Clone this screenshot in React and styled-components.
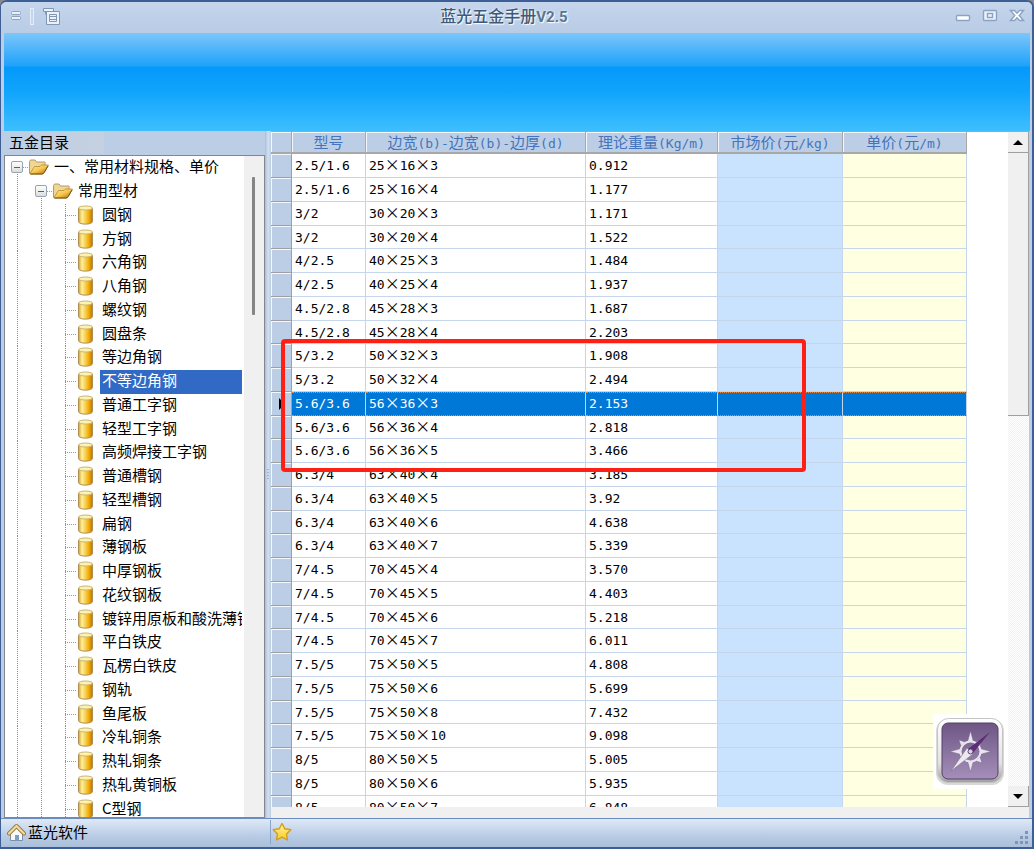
import React from "react";
import styled, { createGlobalStyle } from "styled-components";

const GlobalStyle = createGlobalStyle`
  * {
    box-sizing: border-box;
  }

  body {
    margin: 0;
    background: #8a8a8a;
    font-family: "Noto Sans CJK SC", sans-serif;
    font-size: 15px;
    color: #000;
  }

  button {
    font: inherit;
    color: inherit;
    background: none;
    border: 0;
    padding: 0;
  }
`;

const Window = styled.div`
  display: flex;
  flex-direction: column;
  height: 100vh;
  overflow: hidden;
  background: #bccee6;
  border: solid #3d5f96;
  border-width: 2px 2px 2px 1px;
  border-radius: 7px 7px 0 0;
`;

const TitleBar = styled.header`
  display: grid;
  grid-template-columns: 1fr auto 1fr;
  align-items: center;
  flex: none;
  height: 31px;
  padding: 0 6px 3px 9px;
  background: linear-gradient(#c4d5ec, #b9cce5);
`;

const Title = styled.h1`
  margin: 0 28px 0 0;
  font-size: 16px;
  line-height: 24px;
  font-weight: 500;
  color: #3f5a78;
  text-shadow: 1px 1px 1px #fff, 0 0 3px #e6effa;

  span {
    font-family: Roboto, sans-serif;
    font-size: 15px;
    font-weight: 700;
    color: #5b7590;
  }
`;

const TitleTools = styled.div`
  display: flex;
  align-items: center;
  gap: ${({ $end }) => ($end ? "9px" : "8px")};
  justify-content: ${({ $end }) => ($end ? "flex-end" : "flex-start")};

  button,
  svg {
    display: block;
  }
`;

const Banner = styled.div`
  flex: none;
  height: 98px;
  margin: 0 2px 0 3px;
  background: linear-gradient(
    #7cc6fb 0,
    #1fa2fa 33px,
    #0499fa 34px,
    #12a5fd 60px,
    #3dbfff 98px
  );
`;

const Workspace = styled.main`
  display: flex;
  flex: 1;
  min-height: 0;
  padding: 0 3px;
`;

const TreePane = styled.section`
  display: flex;
  flex-direction: column;
  flex: none;
  width: 261px;
`;

const PaneTitle = styled.h2`
  flex: none;
  width: 97px;
  height: 22px;
  margin: 1px 0 1px 3px;
  padding-left: 2px;
  background: linear-gradient(90deg, #bccee6, #c5d1e1);
  font-size: 15px;
  line-height: 19px;
  font-weight: 400;
`;

const TreeFrame = styled.div`
  display: flex;
  flex: 1;
  min-height: 0;
  border: 1px solid #82878f;
  background: #fff;
`;

const TreeList = styled.ul`
  flex: 1;
  min-width: 0;
  margin: 0;
  padding: 0 2px 0 0;
  overflow: hidden;
  list-style: none;
`;

const TreeRow = styled.li`
  display: flex;
  height: 24px;

  &:nth-child(4n) {
    height: 23px;
  }
`;

const Guide = styled.span`
  display: flex;
  align-items: center;
  justify-content: center;
  flex: none;
  width: 24px;
  padding-bottom: 2px;
  background-image: repeating-linear-gradient(#8c8c8c 0 1px, transparent 1px 2px),
    repeating-linear-gradient(90deg, #9a9a9a 0 1px, transparent 1px 2px);
  background-repeat: no-repeat;
  background-position: 12px ${({ $root }) => ($root ? "16px" : "0")}, 12px 11px;
  background-size: 1px 100%, ${({ $branch }) => ($branch ? "12px 1px" : "0 0")};
`;

const Toggle = styled.button`
  width: 12px;
  height: 12px;
  border: 1px solid #98a3b3;
  border-radius: 2px;
  background: linear-gradient(#3c62b8, #3c62b8) center / 6px 1px no-repeat,
    linear-gradient(#fff, #dcdcd8);
`;

const NodeIcon = styled.span`
  display: flex;
  align-items: center;
  flex: none;
  width: 23px;
  padding-bottom: 2px;
`;

const NodeLabel = styled.button`
  display: flex;
  flex: ${({ $selected }) => ($selected ? "1" : "0 1 auto")};
  min-width: 0;
  padding: 0 2px;
  overflow: hidden;
  line-height: 19px;
  text-align: left;
  white-space: nowrap;
  color: ${({ $selected }) => ($selected ? "#fff" : "#000")};
  background: ${({ $selected }) => ($selected ? "#316ac5" : "none")};
`;

const TreeScroll = styled.div`
  flex: none;
  width: 20px;
  padding: 21px 8px 0;
  background: #f0f0f0;
`;

const TreeThumb = styled.div`
  width: 3px;
  height: 138px;
  border-radius: 1px;
  background: #858585;
`;

const Splitter = styled.div`
  display: flex;
  align-items: center;
  justify-content: center;
  flex: none;
  width: 6px;
  background: linear-gradient(90deg, #a9bdd8, #d3dfee 50%, #bccee6);

  &::before {
    content: "";
    width: 2px;
    height: 11px;
    background: repeating-linear-gradient(#9fb2cf 0 1px, transparent 1px 3px);
  }
`;

const GridPane = styled.section`
  position: relative;
  display: flex;
  flex-direction: column;
  flex: 1;
  min-width: 0;
  border-top: 1px solid #a5a5a5;
  background: #f0f0f0;
`;

const GridView = styled.div`
  display: flex;
  justify-content: space-between;
  flex: 1;
  min-height: 0;
  margin-bottom: 11px;
  background: #fff;
`;

const GridClip = styled.div`
  overflow: hidden;
`;

const Grid = styled.table`
  width: 696px;
  table-layout: fixed;
  border-collapse: separate;
  border-spacing: 0;
`;

const HeadCell = styled.th`
  height: 22px;
  padding: 0;
  border-right: 1px solid #a8a8a8;
  border-bottom: 2px solid #a8a8a8;
  box-shadow: inset 1px 1px #f4f7fb;
  background: #bccee6;
  font-weight: 400;
  line-height: 20px;
  color: #4474bd;
  white-space: nowrap;
`;

const RowHead = styled.th`
  padding: 0;
  border-right: 1px solid #a0a0a0;
  border-bottom: 1px solid #a0a0a0;
  box-shadow: inset 1px 1px #f4f7fb;
  background: #bccee6;

  svg {
    display: block;
    margin-left: 8px;
  }
`;

const tints = { market: "#c9e3ff", price: "#ffffe1" };

const Cell = styled.td`
  padding: 0 0 0 3px;
  border-right: 1px solid #c4d5ec;
  border-bottom: 1px solid #c4d5ec;
  background: ${({ $tint }) => tints[$tint] || "#fff"};
  line-height: 20px;
  vertical-align: top;
  white-space: nowrap;
`;

const Row = styled.tr`
  height: 24px;

  &:nth-child(4n) {
    height: 23px;
  }

  &[aria-selected="true"] ${Cell} {
    color: #fff;
    background: #0078d7;
    border-top: 1px dotted #e08b45;
    border-bottom: 1px dotted #e08b45;
    line-height: 18px;
  }
`;

const Mono = styled.span`
  font-family: "DejaVu Sans Mono", monospace;
  font-size: 13px;
  line-height: 13px;
`;

const ScrollBar = styled.div`
  display: flex;
  flex-direction: column;
  flex: none;
  width: 21px;
  background: repeating-conic-gradient(#f1f1f1 0 25%, #fff 0 50%) 0 0 / 2px 2px;
`;

const ScrollArrow = styled.button`
  display: flex;
  align-items: center;
  justify-content: center;
  flex: none;
  height: 21px;
  margin-top: ${({ $down }) => ($down ? "auto" : "0")};
  background: #f0f0f0;
  border: solid #a0a0a0;
  border-width: 0 1px 1px 0;
`;

const ScrollThumb = styled.div`
  flex: none;
  height: 263px;
  background: #f0f0f0;
  border: solid #a0a0a0;
  border-width: 0 1px 1px 0;
`;

const Highlight = styled.div`
  position: absolute;
  top: 207px;
  left: 10px;
  width: 525px;
  height: 133px;
  border: 4px solid #ff2015;
  border-radius: 4px;
  pointer-events: none;
`;

const CompassButton = styled.button`
  position: absolute;
  right: 24px;
  bottom: 29px;
  width: 72px;
  height: 75px;
  background: #fff;
`;

const StatusBar = styled.footer`
  display: flex;
  align-items: center;
  flex: none;
  height: 29px;
  padding: 0 2px 2px 6px;
  border-top: 1px solid #6c8cbf;
  background: linear-gradient(#dfe9f6, #b9cce6 60%, #aabfd9);
`;

const StatusLink = styled.a`
  display: flex;
  align-items: center;
  gap: 2px;
  width: 264px;
  height: 24px;
  border-right: 1px solid #8ba4c8;
  color: #000;
  line-height: 22px;
  text-decoration: none;
`;

const StatusStar = styled.button`
  display: flex;
  margin-left: 1px;
`;

const Grip = styled.svg`
  align-self: flex-end;
  margin-left: auto;
`;

const leaves = [
  "圆钢",
  "方钢",
  "六角钢",
  "八角钢",
  "螺纹钢",
  "圆盘条",
  "等边角钢",
  "不等边角钢",
  "普通工字钢",
  "轻型工字钢",
  "高频焊接工字钢",
  "普通槽钢",
  "轻型槽钢",
  "扁钢",
  "薄钢板",
  "中厚钢板",
  "花纹钢板",
  "镀锌用原板和酸洗薄钢板",
  "平白铁皮",
  "瓦楞白铁皮",
  "钢轨",
  "鱼尾板",
  "冷轧铜条",
  "热轧铜条",
  "热轧黄铜板",
  "C型钢",
];

const columns = [
  { title: "型号", width: 74 },
  { title: "边宽(b)-边宽(b)-边厚(d)", width: 220 },
  { title: "理论重量(Kg/m)", width: 132 },
  { title: "市场价(元/kg)", width: 125 },
  { title: "单价(元/m)", width: 124 },
];

const rows = [
  ["2.5/1.6", "25×16×3", "0.912"],
  ["2.5/1.6", "25×16×4", "1.177"],
  ["3/2", "30×20×3", "1.171"],
  ["3/2", "30×20×4", "1.522"],
  ["4/2.5", "40×25×3", "1.484"],
  ["4/2.5", "40×25×4", "1.937"],
  ["4.5/2.8", "45×28×3", "1.687"],
  ["4.5/2.8", "45×28×4", "2.203"],
  ["5/3.2", "50×32×3", "1.908"],
  ["5/3.2", "50×32×4", "2.494"],
  ["5.6/3.6", "56×36×3", "2.153"],
  ["5.6/3.6", "56×36×4", "2.818"],
  ["5.6/3.6", "56×36×5", "3.466"],
  ["6.3/4", "63×40×4", "3.185"],
  ["6.3/4", "63×40×5", "3.92"],
  ["6.3/4", "63×40×6", "4.638"],
  ["6.3/4", "63×40×7", "5.339"],
  ["7/4.5", "70×45×4", "3.570"],
  ["7/4.5", "70×45×5", "4.403"],
  ["7/4.5", "70×45×6", "5.218"],
  ["7/4.5", "70×45×7", "6.011"],
  ["7.5/5", "75×50×5", "4.808"],
  ["7.5/5", "75×50×6", "5.699"],
  ["7.5/5", "75×50×8", "7.432"],
  ["7.5/5", "75×50×10", "9.098"],
  ["8/5", "80×50×5", "5.005"],
  ["8/5", "80×50×6", "5.935"],
  ["8/5", "80×50×7", "6.848"],
];

const selectedRow = 10;

// Latin runs are half width, everything else keeps the full CJK cell.
const GridText = ({ children }) =>
  children
    .split(/([\x20-\x7e]+)/)
    .map((part, i) => (i % 2 ? <Mono key={i}>{part}</Mono> : part));

const FolderIcon = () => (
  <svg width="20" height="16" viewBox="0 0 20 16">
    <defs>
      <linearGradient id="folder" x1="0" y1="0" x2="1" y2="1">
        <stop offset="0" stopColor="#ffeb98" />
        <stop offset="0.5" stopColor="#f7c850" />
        <stop offset="1" stopColor="#a86c10" />
      </linearGradient>
    </defs>
    <path
      d="M0.5 14.5V2.5L1.5 1H6l1.5 2H16v3.5"
      fill="#efd694"
      stroke="#b39b68"
    />
    <path
      d="M1 14.500 5.500 7.500H11l1.500-1.500h7L15.500 13q-1 2-2.500 2H1z"
      fill="url(#folder)"
      stroke="#b98a34"
      strokeWidth="0.800"
    />
    <path d="M1.500 15H13q1.500 0 2.500-2L19 7" fill="none" stroke="#6f4c12" />
  </svg>
);

const CylinderIcon = () => (
  <svg width="17" height="20" viewBox="0 0 17 20">
    <defs>
      <linearGradient id="cylinder">
        <stop offset="0" stopColor="#d9a01c" />
        <stop offset="0.25" stopColor="#fdf0a0" />
        <stop offset="0.5" stopColor="#f6cf50" />
        <stop offset="0.75" stopColor="#f0a806" />
        <stop offset="1" stopColor="#b87408" />
      </linearGradient>
    </defs>
    <path
      d="M1.500 3v13.500c0 3.500 14 3.500 14 0v-13.500"
      fill="url(#cylinder)"
      stroke="#b08d50"
    />
    <ellipse
      cx="8.500"
      cy="3"
      rx="7"
      ry="2"
      fill="#fbf3b4"
      stroke="#cdb36c"
    />
  </svg>
);

const HomeIcon = () => (
  <svg width="19" height="19" viewBox="0 0 19 19">
    <path d="M3.500 9.500 9.500 4l6 5.500v8h-12z" fill="#f6f8fb" stroke="#7b8ea8" />
    <path
      d="M2 10.500 9.500 3l7.500 7.500"
      fill="none"
      stroke="#98793a"
      strokeWidth="4"
      strokeLinecap="round"
      strokeLinejoin="round"
    />
    <path
      d="M2 10.500 9.500 3l7.500 7.500"
      fill="none"
      stroke="#f0dba4"
      strokeWidth="2.200"
      strokeLinecap="round"
      strokeLinejoin="round"
    />
    <path d="M8 17.500v-5.500h4v5.500z" fill="#7f9cc4" />
  </svg>
);

const StarIcon = () => (
  <svg width="20" height="20" viewBox="0 0 20 20">
    <defs>
      <linearGradient id="star" x1="0" y1="0" x2="0" y2="1">
        <stop offset="0" stopColor="#fff7a0" />
        <stop offset="1" stopColor="#fbc920" />
      </linearGradient>
    </defs>
    <path
      d="M10 1.500 12.800 6.800l6 .9-4.300 4.300 1 6-5.500-2.800L4.500 18l1-6L1.200 7.700 7.200 6.800z"
      fill="url(#star)"
      stroke="#d79c18"
      strokeWidth="1.400"
      strokeLinejoin="round"
    />
  </svg>
);

const CompassIcon = () => (
  <svg width="72" height="75" viewBox="0 0 72 75">
    <defs>
      <linearGradient id="compassFrame" x1="0" y1="0" x2="0" y2="1">
        <stop offset="0" stopColor="#fff" />
        <stop offset="0.7" stopColor="#e2e2e2" />
        <stop offset="1" stopColor="#9e9e9e" />
      </linearGradient>
      <linearGradient id="compassFace" x1="0" y1="0" x2="0" y2="1">
        <stop offset="0" stopColor="#6d5683" />
        <stop offset="1" stopColor="#a58fba" />
      </linearGradient>
    </defs>
    <rect x="3" y="5" width="68" height="66" rx="12" fill="#d8d8d8" />
    <rect
      x="4.500"
      y="4.500"
      width="65"
      height="64"
      rx="11"
      fill="url(#compassFrame)"
      stroke="#c4c4c4"
    />
    <rect
      x="9"
      y="9"
      width="56"
      height="56"
      rx="6"
      fill="url(#compassFace)"
      stroke="#54406a"
    />
    <g fill="#e9e5ee" stroke="#77668a" strokeWidth="0.500">
      <path d="M37.500 17 40.500 28h-6zM37.500 58l3-11h-6zM17 37.500l11-3v6zM58 37.500l-11-3v6z" />
      <path d="m26 26 6 2-4 4zM49 26l-6 2 4 4zM26 49l6-2-4-4zM49 49l-6-2 4-4z" />
    </g>
    <circle cx="37.500" cy="37.500" r="10" fill="none" stroke="#e9e5ee" strokeWidth="2" />
    <path d="M57 18 40 39l-5-4z" fill="#5c2c76" />
    <path d="M18 57 34 34l6 6z" fill="#ece9ee" stroke="#7c718a" strokeWidth="0.600" />
    <circle cx="37.500" cy="37.500" r="2.500" fill="#d8d3de" stroke="#5c4a70" />
  </svg>
);

const TreeItem = ({ depth, label, selected }) => (
  <TreeRow>
    {Array.from({ length: depth }, (_, i) => {
      const last = i === depth - 1;
      return (
        <Guide key={i} $branch={last} $root={last && depth < 3}>
          {last && depth < 3 && <Toggle aria-label={label} />}
        </Guide>
      );
    })}
    <NodeIcon>{depth < 3 ? <FolderIcon /> : <CylinderIcon />}</NodeIcon>
    <NodeLabel $selected={selected}>{label}</NodeLabel>
  </TreeRow>
);

const App = () => {
  return (
    <>
      <GlobalStyle />
      <Window>
        <TitleBar>
          <TitleTools>
            <button aria-label="菜单">
              <svg width="12" height="12" fill="#e9f1fb" stroke="#8ba0c0">
                <rect x="1.500" y="1.500" width="9" height="3" rx="1" />
                <rect x="1.500" y="6.500" width="9" height="3" rx="1" />
              </svg>
            </button>
            <svg width="4" height="17" fill="#c4d5ec" stroke="#e4eefa">
              <rect x="0.500" y="0.500" width="3" height="16" />
            </svg>
            <button aria-label="窗口">
              <svg width="19" height="19" fill="#e9f1fb" stroke="#8297b8">
                <path d="M1.500 1.500h10v3h-10z" />
                <path d="M3.500 4.500v3" />
                <path d="M4.500 4.500h13v13h-13z" />
                <path d="M7.500 7.500h7v7h-7zM8 9.500h6M8 12.500h6" />
              </svg>
            </button>
          </TitleTools>
          <Title>
            蓝光五金手册<span>V2.5</span>
          </Title>
          <TitleTools $end>
            <button aria-label="最小化">
              <svg width="18" height="18" fill="#fff" stroke="#8ba2c3" strokeWidth="1.400">
                <rect x="2.500" y="8.500" width="13" height="5" rx="1" />
              </svg>
            </button>
            <button aria-label="最大化">
              <svg width="18" height="18" fill="#e9f1fb" stroke="#8ba2c3" strokeWidth="1.400">
                <rect x="2.500" y="3.500" width="13" height="10" rx="1" />
                <rect x="6.500" y="6.500" width="5" height="4" />
              </svg>
            </button>
            <button aria-label="关闭">
              <svg width="18" height="18" fill="#fff" stroke="#8ba2c3" strokeWidth="1.400">
                <path d="M2.500 3.500h4L9 6.200l2.500-2.700h4L11.200 8.500l4.300 5h-4L9 10.800l-2.500 2.700h-4l4.300-5z" />
              </svg>
            </button>
          </TitleTools>
        </TitleBar>

        <Banner />

        <Workspace>
          <TreePane>
            <PaneTitle>五金目录</PaneTitle>
            <TreeFrame>
              <TreeList>
                <TreeItem depth={1} label="一、常用材料规格、单价" />
                <TreeItem depth={2} label="常用型材" />
                {leaves.map((label) => (
                  <TreeItem
                    key={label}
                    depth={3}
                    label={label}
                    selected={label === "不等边角钢"}
                  />
                ))}
              </TreeList>
              <TreeScroll>
                <TreeThumb />
              </TreeScroll>
            </TreeFrame>
          </TreePane>

          <Splitter />

          <GridPane>
            <GridView>
              <GridClip>
                <Grid>
                  <colgroup>
                    <col width="21" />
                    {columns.map(({ title, width }) => (
                      <col key={title} width={width} />
                    ))}
                  </colgroup>
                  <thead>
                    <tr>
                      <HeadCell />
                      {columns.map(({ title }) => (
                        <HeadCell key={title} scope="col">
                          <GridText>{title}</GridText>
                        </HeadCell>
                      ))}
                    </tr>
                  </thead>
                  <tbody>
                    {rows.map(([model, size, weight], i) => (
                      <Row key={size} aria-selected={i === selectedRow}>
                        <RowHead>
                          {i === selectedRow && (
                            <svg width="6" height="12">
                              <path d="M0 0l6 6-6 6z" />
                            </svg>
                          )}
                        </RowHead>
                        <Cell>
                          <GridText>{model}</GridText>
                        </Cell>
                        <Cell>
                          <GridText>{size}</GridText>
                        </Cell>
                        <Cell>
                          <GridText>{weight}</GridText>
                        </Cell>
                        <Cell $tint="market" />
                        <Cell $tint="price" />
                      </Row>
                    ))}
                  </tbody>
                </Grid>
              </GridClip>
              <ScrollBar>
                <ScrollArrow aria-label="向上滚动">
                  <svg width="10" height="5">
                    <path d="M0 5l5-5 5 5z" />
                  </svg>
                </ScrollArrow>
                <ScrollThumb />
                <ScrollArrow $down aria-label="向下滚动">
                  <svg width="10" height="5">
                    <path d="M0 0l5 5 5-5z" />
                  </svg>
                </ScrollArrow>
              </ScrollBar>
            </GridView>
            <Highlight />
            <CompassButton aria-label="指南针">
              <CompassIcon />
            </CompassButton>
          </GridPane>
        </Workspace>

        <StatusBar>
          <StatusLink href="#home">
            <HomeIcon />
            蓝光软件
          </StatusLink>
          <StatusStar aria-label="收藏">
            <StarIcon />
          </StatusStar>
          <Grip width="15" height="15" fill="#7f95b5">
            <path d="M10 1h3v3h-3zM5 6h3v3H5zM10 6h3v3h-3zM0 11h3v3H0zM5 11h3v3H5zM10 11h3v3h-3z" />
          </Grip>
        </StatusBar>
      </Window>
    </>
  );
};

export default App;
